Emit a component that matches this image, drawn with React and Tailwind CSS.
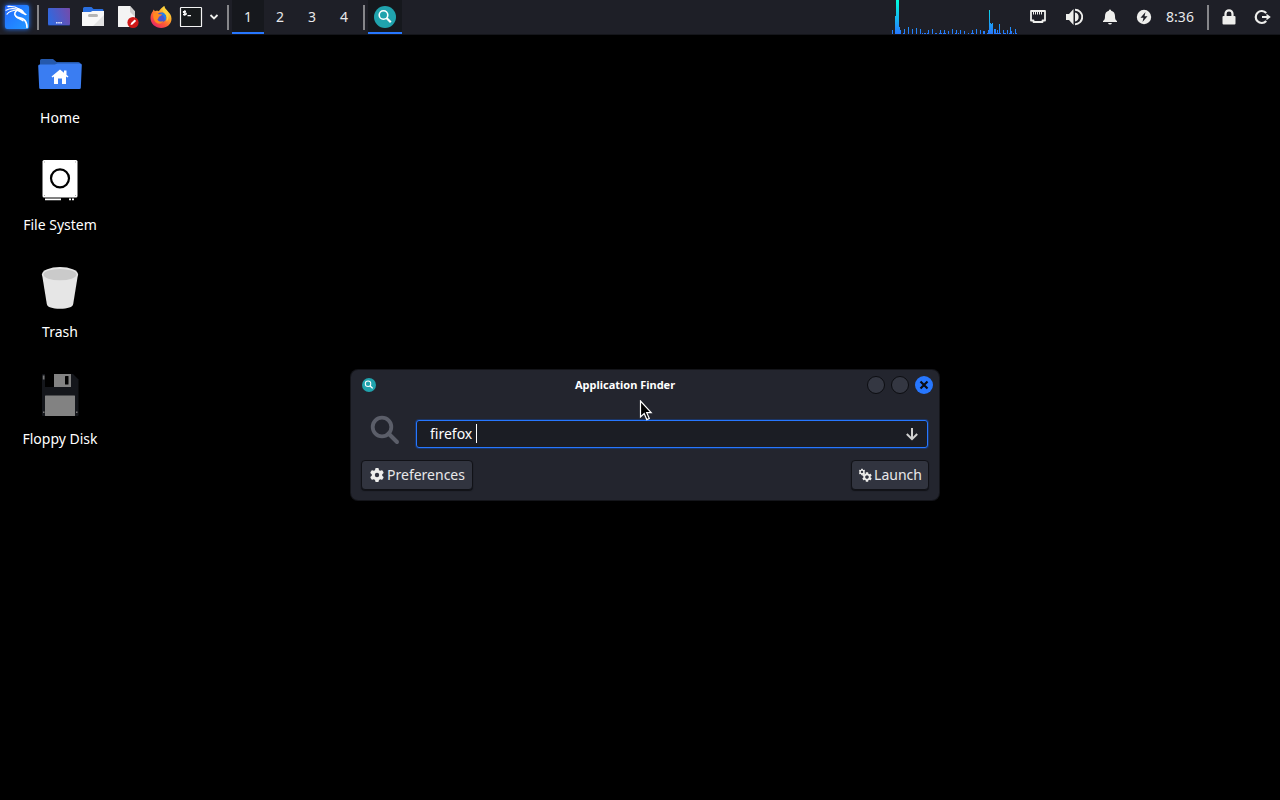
import { useState } from "react";
import { FaGear } from "react-icons/fa6";
import { MdSettings } from "react-icons/md";

// CPU load samples as [x, height], one pixel column each
const samples = [
    [0, 4], [3, 18], [4, 34], [5, 34], [6, 34], [7, 7], [8, 4], [11, 1], [12, 5], [16, 7], [20, 5], [24, 6],
    [28, 5], [30, 1], [32, 1], [33, 1], [35, 1], [36, 4], [40, 5], [43, 1], [44, 1], [47, 1], [48, 4], [49, 1],
    [51, 1], [52, 4], [53, 1], [56, 3], [60, 5], [63, 1], [64, 4], [66, 1], [68, 4], [72, 3], [76, 1], [79, 1],
    [80, 4], [81, 1], [84, 5], [88, 4], [91, 3], [92, 3], [95, 1], [96, 4], [97, 24], [98, 11], [99, 10],
    [100, 11], [102, 5], [103, 5], [104, 1], [105, 4], [106, 1], [107, 10], [108, 1], [111, 4], [112, 1],
    [113, 1], [115, 4], [117, 1], [118, 7], [119, 3], [121, 1], [123, 5], [124, 1],
];

function Separator() {
    return (
        <div className="w-2 flex shrink-0 items-center justify-center">
            <div className="w-[2px] h-[25px] bg-[#86868a]"></div>
        </div>
    );
}

function PanelButton({ title, width = "w-[34px]", active, children }) {
    return (
        <button
            title={title}
            className={`${width} h-[34px] pt-[2px] flex shrink-0 items-center justify-center border-b-2
                        ${active ? "bg-[#16181d] border-[#2777ff]" : "border-transparent"}`}>
            {children}
        </button>
    );
}

function CpuGraph() {
    return (
        <svg width="125" height="34" className="mr-[3px] shrink-0" shapeRendering="crispEdges">
            <defs>
                <linearGradient id="load" gradientUnits="userSpaceOnUse" x1="0" y1="0" x2="0" y2="34">
                    <stop offset="0" stopColor="#00ffdd" />
                    <stop offset="1" stopColor="#2777ff" />
                </linearGradient>
            </defs>
            {samples.map(([x, h]) => (
                <rect key={x} x={x} y={34 - h} width="1" height={h} fill="url(#load)" />
            ))}
        </svg>
    );
}

function DragonIcon() {
    return (
        <span className="w-6 h-6 rounded-[2px] bg-linear-to-br from-[#2566ff] to-[#2498ff] shadow-[0_0_5px_#2777ff]">
            <svg width="24" height="24" viewBox="0 0 24 24" fill="none" stroke="#fff" strokeLinecap="round">
                <path d="M3 1.500C7 1.200 11 1.800 14 4" strokeWidth="1.300" />
                <path d="M1 5.200C5 3.300 9 3.300 13 4.600" strokeWidth="1.200" />
                <path d="M2 9.200C4 6.600 8 5.200 12 5" strokeWidth="1.100" />
                <path d="M12 3.200c3.500 0 6 1.600 7.200 4l2.800 2.600-1.700.4-2.300-1.200c-1.800-.2-3-1.800-5-2.400z" fill="#fff" stroke="none" />
                <path d="M13 5C9.500 6.500 8.800 9.500 11 11.300c2 1.600 5.500 1.500 7.800 3.200 2.200 1.700 3.200 4.500 3.200 8" strokeWidth="1.600" />
                <path d="M11 11.300c1.500 2.500 4.500 2.300 7 4.500" strokeWidth="1.300" />
            </svg>
        </span>
    );
}

function ShowDesktopIcon() {
    return (
        <svg width="24" height="24" viewBox="0 0 24 24">
            <defs>
                <linearGradient id="desk" x1="0" y1="0.3" x2="1" y2="0">
                    <stop offset="0" stopColor="#3367dc" />
                    <stop offset="1" stopColor="#774aa9" />
                </linearGradient>
            </defs>
            <rect x="1" y="3" width="22" height="18" rx="1" fill="#20356d" />
            <rect x="1" y="3" width="22" height="17" rx="1" fill="url(#desk)" />
            <path d="M9 17h1.600v1.600H9zM11.200 17h1.600v1.600h-1.600zM13.400 17H15v1.600h-1.600z" fill="#dfe5ff" />
        </svg>
    );
}

function FilesIcon() {
    return (
        <svg width="24" height="24" viewBox="0 0 24 24">
            <path d="M2 9V3.500Q2 2 3.500 2H10.500l2 2h9q1 0 1 1.500V9z" fill="#2a6fe0" />
            <path d="M1 7h8.500l2-1H23v14.500q0 .5-.5.500H1.500q-.5 0-.5-.5z" fill="#f8f8f8" />
            <path d="M23 10v10.500q0 .5-.5.500H12z" fill="#e2e2e2" />
            <rect x="7" y="9" width="10" height="3" rx="1.500" fill="#b5b5b5" />
        </svg>
    );
}

function EditorIcon() {
    return (
        <svg width="24" height="24" viewBox="0 0 24 24">
            <path d="M3.500 1h11.500l5 5.500V22H3.500q-.5 0-.5-.5v-20q0-.5.5-.5z" fill="#f4f4f4" />
            <path d="M15 1l5 5.500V12l-5-5z" fill="#cfcfcf" />
            <circle cx="18" cy="17.500" r="5.600" fill="#d01818" />
            <path d="M15.500 20l.6-1.900 3.600-3.600 1.400 1.400-3.600 3.600z" fill="#fff" />
        </svg>
    );
}

function FirefoxIcon() {
    return (
        <svg width="24" height="24" viewBox="0 0 24 24">
            <defs>
                <linearGradient id="fox" x1="0.850" y1="0.1" x2="0.2" y2="0.950">
                    <stop offset="0" stopColor="#ffe84a" />
                    <stop offset="0.35" stopColor="#ffa52a" />
                    <stop offset="0.65" stopColor="#ff5a35" />
                    <stop offset="1" stopColor="#e82568" />
                </linearGradient>
            </defs>
            <path d="M15.200 1c.2 2 1.500 3.200 3 4.700 2.400 2.500 4.300 4.300 4.300 8 0 5.300-4.700 9.300-10.300 9.300S1.500 18.700 1.500 13c0-2.800 1-5.200 2.400-6.800l.6-1.700 1.500 1.700C7.300 5.800 8.500 5.700 9.800 6.200 12 3.500 12.500 3 15.200 1z" fill="url(#fox)" />
            <circle cx="12.200" cy="12.500" r="5" fill="#4b55cf" />
            <path d="M13 7.500a5.200 5.200 0 0 1 4.200 5c0 1.500-.5 2.500-1.200 3.500-.5-4-2-6.500-5-7z" fill="#2680e8" />
            <path d="M4.200 8.500c2-.8 4.300-.4 5.600.7h3.200c-.2 1.400-2.200 1.800-3 2.600-.6.700-.3 1.900-1.600 2.700 1 2.300 4 2.700 6 1.200-1 3.300-6.200 4-8.600.5C4.300 14 4 11 4.200 8.500z" fill="#ff8a20" />
            <path d="M15.200 1c-2 2.200-1.900 5 .2 7 2.300 2.200 3.300 5 2 8.500 2.800-2.300 3-6.600.8-10.800-1.500-1.500-2.800-2.700-3-4.700z" fill="#ffd23c" />
        </svg>
    );
}

function TerminalIcon() {
    return (
        <svg width="24" height="24" viewBox="0 0 24 24">
            <rect x="1.500" y="2.500" width="21" height="19" rx="0.600" fill="#171a1c" stroke="#f3f3f3" strokeWidth="1.200" />
            <path d="M7 6.300H5.300q-1 0-1 .8t1 .8h1q1 0 1 .9t-1 .9H4M5.700 5.300v5.500M8.500 10.600h3.500" fill="none" stroke="#fff" strokeWidth="1.200" />
        </svg>
    );
}

function FinderIcon({ size }) {
    return (
        <svg viewBox="0 0 22 22" className={`${size} shrink-0`}>
            <circle cx="11" cy="11" r="11" fill="#20a3ad" />
            <circle cx="9.500" cy="9" r="4.300" fill="none" stroke="#fff" strokeWidth="1.600" />
            <path d="M12.500 12l4.300 4.300" stroke="#fff" strokeWidth="2.200" />
        </svg>
    );
}

function EthernetIcon() {
    return (
        <svg width="18" height="16" viewBox="0 0 18 16" fill="none" stroke="#eeeeec">
            <path d="M2 2h14v9.500h-2.500V13h-9v-1.500H2z" strokeWidth="1.800" strokeLinejoin="round" />
            <path d="M4.500 3v2.500M6.500 3v2.500M8.500 3v2.500M10.500 3v2.500M12.500 3v2.500" strokeWidth="1" />
        </svg>
    );
}

function VolumeIcon() {
    return (
        <svg width="18" height="18" viewBox="0 0 18 18" fill="#eeeeec">
            <path d="M1 6h3l4.500-5v16L4 12H1z" />
            <path d="M10 4.500a4.600 4.600 0 0 1 0 9z" />
            <path d="M10 1.800a7.200 7.200 0 0 1 0 14.400" fill="none" stroke="#eeeeec" strokeWidth="1.900" />
        </svg>
    );
}

function BellIcon() {
    return (
        <svg width="16" height="16" viewBox="0 0 16 16" fill="#eeeeec">
            <path d="M8 .5q1 0 1.200 1.200C11.700 2.300 13 4.300 13 7c0 3 .5 4 2 5v1H1v-1c1.500-1 2-2 2-5 0-2.700 1.300-4.700 3.800-5.300Q7 .5 8 .5z" />
            <path d="M6 14h4q-.5 1.500-2 1.500T6 14z" />
        </svg>
    );
}

function PowerIcon() {
    return (
        <svg width="16" height="16" viewBox="0 0 16 16">
            <circle cx="8" cy="8" r="7.200" fill="#eeeeec" />
            <path d="M9.500 3L4.500 8.800h3L6.500 13l5-5.800h-3z" fill="#1e1f27" />
        </svg>
    );
}

function LockIcon() {
    return (
        <svg width="16" height="16" viewBox="0 0 16 16">
            <rect x="1.500" y="7" width="13" height="8.500" rx="1" fill="#eeeeec" />
            <path d="M4.500 8V4.800a3.500 3.500 0 0 1 7 0V8" fill="none" stroke="#eeeeec" strokeWidth="2.200" />
        </svg>
    );
}

function LogoutIcon() {
    return (
        <svg width="18" height="18" viewBox="0 0 18 18">
            <path d="M12.200 5a6 6 0 1 0 0 8" fill="none" stroke="#eeeeec" strokeWidth="2.200" />
            <path d="M8 8h4.500V5.800L16.800 9l-4.300 3.200V10H8z" fill="#eeeeec" />
        </svg>
    );
}

function HomeIcon() {
    return (
        <svg width="48" height="48" viewBox="0 0 48 48">
            <path d="M4 17V9.500Q4 8 5.500 8H17l3.500 3H42.500q2 0 2 2.500v4z" fill="#2559ad" />
            <path d="M2.200 15q-.1-1.500 1.400-1.500h15.100l2.800-1h22.900q1.500 0 1.400 1.500L44.800 37q-.1 1-1.500 1H4.700q-1.400 0-1.500-1z" fill="#3a7df2" />
            <path d="M24 18.500l8.500 7-1 1-1.500-1v7.500h-4v-5.500h-4V33h-4v-7.500l-1.500 1-1-1zM28 19.500h2.500V24L28 22z" fill="#fff" />
        </svg>
    );
}

function DriveIcon() {
    return (
        <svg width="48" height="48" viewBox="0 0 48 48">
            <rect x="6.500" y="2" width="35" height="37.500" rx="1.500" fill="#fff" />
            <path d="M8 3.500h1v1H8zM39 3.500h1v1h-1zM8 37h1v1H8zM39 37h1v1h-1z" fill="#aaa" />
            <circle cx="24" cy="20.300" r="9" fill="#fff" stroke="#000" strokeWidth="2.200" />
            <path d="M9 40.500h16v1.800H9zM33 40.500h2v1.800h-2zM36 40.500h2v1.800h-2z" fill="#fff" />
        </svg>
    );
}

function TrashIcon() {
    return (
        <svg width="48" height="48" viewBox="0 0 48 48">
            <path d="M6 9.300L10.800 39c.6 3.300 5.500 4.700 13.200 4.700s12.600-1.400 13.200-4.700L42 9.300z" fill="#e6e6e6" />
            <ellipse cx="24" cy="9.300" rx="18" ry="7.300" fill="#e6e6e6" />
            <ellipse cx="24" cy="9.600" rx="16.500" ry="5.700" fill="#cacaca" />
        </svg>
    );
}

function FloppyIcon() {
    return (
        <svg width="48" height="48" viewBox="0 0 48 48">
            <path d="M7 2h30l5.500 5.500V43q0 1-1 1H7q-1 0-1-1V3q0-1 1-1z" fill="#14161b" />
            <rect x="9" y="2" width="10" height="13" fill="#000" />
            <rect x="18" y="2" width="17" height="13" fill="#828282" />
            <rect x="29" y="4" width="3.500" height="8.500" rx="0.500" fill="#000" />
            <rect x="9" y="23.500" width="30" height="20.500" rx="0.500" fill="#828282" />
            <path d="M6.800 3.500h1.700v4H6.800zM7 39.500h1.500V41H7zM40 39.500h1.500V41H40z" fill="#777" />
        </svg>
    );
}

function GearsIcon() {
    return (
        <span className="w-[14px] h-[14px] relative shrink-0 text-[#eeeeec]">
            <MdSettings className="w-2 h-2 absolute top-0 left-0" />
            <MdSettings className="w-3 h-3 absolute -right-px -bottom-px" />
        </span>
    );
}

const shortcuts = [
    { label: "Home", icon: <HomeIcon /> },
    { label: "File System", icon: <DriveIcon /> },
    { label: "Trash", icon: <TrashIcon /> },
    { label: "Floppy Disk", icon: <FloppyIcon /> },
];

function Panel() {
    const [workspace, setWorkspace] = useState(1);

    return (
        <header className="w-full h-[35px] flex items-start justify-between border-b border-[#14151a] text-[#e8e8ea] bg-[#1e1f27]">
            <div className="h-[34px] flex">
                <PanelButton title="Applications"><DragonIcon /></PanelButton>
                <Separator />
                <PanelButton title="Show Desktop"><ShowDesktopIcon /></PanelButton>
                <PanelButton title="File Manager"><FilesIcon /></PanelButton>
                <PanelButton title="Text Editor"><EditorIcon /></PanelButton>
                <PanelButton title="Firefox"><FirefoxIcon /></PanelButton>
                <PanelButton title="Terminal" width="w-[26px]"><TerminalIcon /></PanelButton>
                <PanelButton title="More terminals" width="w-5">
                    <svg width="10" height="6" viewBox="0 0 10 6">
                        <path d="M1.500 1L5 4.500 8.500 1" fill="none" stroke="#eeeeec" strokeWidth="1.800" />
                    </svg>
                </PanelButton>
                <Separator />
                {[1, 2, 3, 4].map((n) => (
                    <button
                        key={n}
                        onClick={() => setWorkspace(n)}
                        className={`w-8 h-[34px] pt-[2px] border-b-2
                                    ${workspace === n ? "bg-[#16181d] border-[#2777ff]" : "border-transparent"}`}>
                        {n}
                    </button>
                ))}
                <Separator />
                <PanelButton title="Application Finder" active><FinderIcon size="w-[22px] h-[22px]" /></PanelButton>
            </div>

            <div className="h-[34px] flex">
                <CpuGraph />
                <PanelButton title="Network" width="w-9"><EthernetIcon /></PanelButton>
                <PanelButton title="Volume" width="w-9"><VolumeIcon /></PanelButton>
                <PanelButton title="Notifications" width="w-9"><BellIcon /></PanelButton>
                <PanelButton title="Power" width="w-8"><PowerIcon /></PanelButton>
                <time className="w-10 mr-1 leading-[34px] text-center">8:36</time>
                <Separator />
                <PanelButton title="Lock Screen"><LockIcon /></PanelButton>
                <PanelButton title="Log Out"><LogoutIcon /></PanelButton>
            </div>
        </header>
    );
}

function FinderWindow() {
    const [query, setQuery] = useState("firefox ");

    return (
        <section className="w-[588px] absolute top-[370px] left-[351px] px-[10px] pb-[10px] rounded-[7px] bg-[#23252e] shadow-[0_0_0_1px_#14151a]">
            <div className="h-[30px] flex items-center">
                <div className="w-[22px] pl-px"><FinderIcon size="w-[14px] h-[14px]" /></div>
                <h1 className="flex-1 text-center text-[11px] font-bold text-white">Application Finder</h1>
                <div className="flex gap-[6px]">
                    <button title="Minimize" className="w-[18px] h-[18px] rounded-full border border-[#0c0d11] bg-[#343742]"></button>
                    <button title="Maximize" className="w-[18px] h-[18px] rounded-full border border-[#0c0d11] bg-[#343742]"></button>
                    <button title="Close" className="w-[18px] h-[18px] -mr-1 flex items-center justify-center rounded-full bg-[#2777ff]">
                        <svg width="10" height="10" viewBox="0 0 10 10">
                            <path d="M1.500 1.500l7 7M8.500 1.500l-7 7" stroke="#0b0d14" strokeWidth="2.200" />
                        </svg>
                    </button>
                </div>
            </div>

            <div className="mt-5 pr-px flex">
                <svg width="30" height="30" viewBox="0 0 30 30" className="-mt-[5px] ml-[9px] mr-4 shrink-0">
                    <circle cx="12" cy="12" r="9.300" fill="none" stroke="#5b5e69" strokeWidth="3.800" />
                    <path d="M18.500 18.500l8.500 8.500" stroke="#5b5e69" strokeWidth="4" strokeLinecap="round" />
                </svg>
                <div className="h-7 relative flex-1">
                    <input
                        type="text"
                        aria-label="Command"
                        value={query}
                        onChange={(e) => setQuery(e.target.value)}
                        className="w-full h-full px-[13px] pb-[2px] outline-none rounded-[3px] border border-[#2777ff] text-white bg-[#1b1d24] shadow-[0_0_0_1px_#1a3566]" />
                    {/* Text cursor */}
                    <span className="w-px h-[19px] absolute top-1 left-[60px] bg-white"></span>
                    <button title="Expand" className="w-4 h-4 absolute top-[6px] right-2">
                        <svg width="16" height="16" viewBox="0 0 16 16" fill="none" stroke="#d0d0d0" strokeWidth="2">
                            <path d="M8 2v11M2.800 8L8 13.200 13.200 8" />
                        </svg>
                    </button>
                </div>
            </div>

            <div className="mt-3 flex justify-between">
                <button className="w-28 h-[30px] flex items-center justify-center gap-[2px] rounded-[4px] border border-[#111217] text-[#e8e8ea] bg-[#31343f] shadow-[0_1px_1px_#111217]">
                    <FaGear className="w-4 h-[14px] text-[#eeeeec]" />
                    Preferences
                </button>
                <button className="w-[78px] h-[30px] flex items-center justify-center gap-[2px] rounded-[4px] border border-[#111217] text-[#e8e8ea] bg-[#31343f] shadow-[0_1px_1px_#111217]">
                    <GearsIcon />
                    Launch
                </button>
            </div>
        </section>
    );
}

function App() {
    return (
        <div className="w-full min-h-screen relative font-['Noto_Sans',sans-serif] text-[14px] leading-5 bg-black">
            <Panel />

            <main>
                <ul className="w-[120px] pt-4 flex flex-col gap-[30px]">
                    {shortcuts.map(({ label, icon }) => (
                        <li key={label} className="h-[77px] flex flex-col items-center justify-between text-white">
                            {icon}
                            <span>{label}</span>
                        </li>
                    ))}
                </ul>

                <FinderWindow />
            </main>

            {/* Mouse pointer */}
            <svg width="14" height="22" viewBox="0 0 14 22" className="absolute top-[400px] left-[639px]">
                <path d="M1.500 1v16l3.700-3.400 2.600 6 2.500-1.100-2.600-5.800h4.500z" fill="#000" stroke="#fff" strokeWidth="1.200" />
            </svg>
        </div>
    );
}

export default App;
